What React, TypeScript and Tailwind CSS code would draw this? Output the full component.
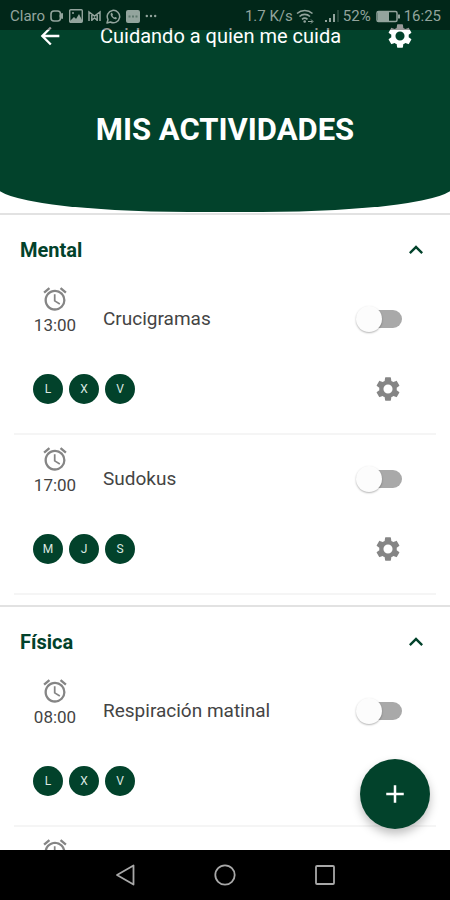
import { useState } from "react";
import {
    MdAccessAlarm,
    MdAdd,
    MdArrowBack,
    MdExpandLess,
    MdExpandMore,
} from "react-icons/md";

type Actividad = {
    id: number;
    hora: string;
    nombre: string;
    dias: string[];
};

type Categoria = {
    titulo: string;
    actividades: Actividad[];
};

const categorias: Categoria[] = [
    {
        titulo: "Mental",
        actividades: [
            { id: 1, hora: "13:00", nombre: "Crucigramas", dias: ["L", "X", "V"] },
            { id: 2, hora: "17:00", nombre: "Sudokus", dias: ["M", "J", "S"] },
        ],
    },
    {
        titulo: "Física",
        actividades: [
            { id: 3, hora: "08:00", nombre: "Respiración matinal", dias: ["L", "X", "V"] },
            { id: 4, hora: "", nombre: "", dias: [] },
        ],
    },
];

const Engranaje = ({ className }: { className?: string }) => (
    <svg className={className} viewBox="0 0 24 24" fill="currentColor" fillRule="evenodd">
        <path d="M19.430 12.980c.04-.32.07-.64.07-.98s-.03-.66-.07-.98l2.110-1.650c.19-.15.24-.42.12-.64l-2-3.460c-.12-.22-.39-.3-.61-.22l-2.490 1c-.52-.4-1.080-.73-1.690-.98l-.38-2.650C14.460 2.180 14.250 2 14 2h-4c-.25 0-.46.18-.49.42l-.38 2.650c-.61.25-1.170.59-1.690.98l-2.490-1c-.23-.09-.49 0-.61.22l-2 3.460c-.13.22-.07.49.12.64l2.110 1.650c-.04.32-.07.65-.07.98s.03.66.07.98l-2.110 1.650c-.19.15-.24.42-.12.64l2 3.460c.12.22.39.3.61.22l2.490-1c.52.4 1.080.73 1.690.98l.38 2.650c.03.24.24.42.49.42h4c.25 0 .46-.18.49-.42l.38-2.650c.61-.25 1.170-.59 1.690-.98l2.490 1c.23.09.49 0 .61-.22l2-3.460c.12-.22.07-.49-.12-.64l-2.110-1.650zM12 15.900a3.900 3.900 0 1 1 0-7.800 3.900 3.900 0 0 1 0 7.800z" />
    </svg>
);

const StatusBar = () => (
    <div className="absolute inset-x-0 top-0 z-20 flex h-[30px] items-center justify-between bg-black/40 pl-[10px] pr-[9px] pt-[2px] text-[15px] text-[#93a49d]">
        <div className="flex items-center gap-[5px]">
            <span>Claro</span>
            {/* cámara */}
            <svg width="14" height="14" viewBox="0 0 14 14" fill="none" stroke="currentColor" strokeWidth="1.6">
                <rect x="1" y="2" width="9.500" height="10" rx="3" />
                <path d="M10 5.500l2.500-1v5l-2.500-1z" fill="currentColor" strokeWidth="1" />
            </svg>
            {/* imagen */}
            <svg width="14" height="14" viewBox="0 0 14 14" fill="none" stroke="currentColor" strokeWidth="1.4">
                <rect x="0.7" y="0.7" width="12.6" height="12.6" rx="1" />
                <path d="M1 12l4-4 2 2 3-5 3 6v2H1z" fill="currentColor" stroke="none" />
                <path d="M3 4h2M7 10l-2 3" />
            </svg>
            {/* correo */}
            <svg width="13" height="12" viewBox="0 0 13 12" fill="none" stroke="currentColor" strokeWidth="1.500">
                <path d="M1 11V2l5.500 4L12 2v9M3.800 11V5M9.200 11V5M4 10l2.500-2L9 10" />
            </svg>
            {/* whatsapp */}
            <svg width="15" height="15" viewBox="0 0 15 15">
                <path d="M1 14l1-3.500A6.200 6.200 0 1 1 4.500 13z" fill="none" stroke="currentColor" strokeWidth="1.500" strokeLinejoin="round" />
                <path d="M5.200 4c-1 .8-.8 2.400.8 4.200s3.600 2.600 4.600 1.500c.5-.6.3-.9-.2-1.200l-1-.5c-.5-.2-.8.600-1.200.5-.7-.3-1.400-1-1.700-1.700-.1-.4.600-.7.400-1.200L6.300 4.300C6 3.800 5.600 3.700 5.200 4z" fill="currentColor" />
            </svg>
            {/* mensajes */}
            <svg width="14" height="13" viewBox="0 0 14 13">
                <rect width="14" height="13" rx="2" fill="currentColor" />
                <path d="M2.500 6.500h2M6 6.500h2M9.500 6.500h2" stroke="#5d776c" strokeWidth="2" />
            </svg>
            <svg width="14" height="4" viewBox="0 0 14 4" fill="currentColor">
                <circle cx="1.800" cy="2" r="1.200" />
                <circle cx="6" cy="2" r="1.200" />
                <circle cx="10.200" cy="2" r="1.200" />
            </svg>
        </div>
        <div className="flex items-center gap-[3px]">
            <span>1.7 K/s</span>
            <svg width="18" height="15" viewBox="0 0 18 15" fill="none" stroke="currentColor" strokeWidth="1.600">
                <path d="M1 4.500C5.500.5 12 .5 16.500 4.500M3.500 7.500c3-2.800 7.500-2.800 10.500 0M6 10.300c1.700-1.500 3.800-1.500 5.500 0" />
                <circle cx="8.700" cy="12.500" r="1.300" fill="currentColor" stroke="none" />
                <path d="M12 12.500h4.500M15 10.500l2 2-2 2" strokeWidth="1" />
            </svg>
            <svg className="ml-2" width="15" height="14" viewBox="0 0 15 14" fill="currentColor">
                <path d="M0 11h2v2H0zM4 9h2v4H4zM8 5h2v8H8z" />
                <path d="M12 1h2v12h-2z" opacity=".25" />
            </svg>
            <span>52%</span>
            <svg className="ml-[2px]" width="25" height="13" viewBox="0 0 25 13" fill="none" stroke="currentColor">
                <rect x="1" y="1.500" width="20" height="10" rx="1.500" strokeWidth="1.500" />
                <rect x="2" y="2" width="11" height="9" fill="currentColor" stroke="none" />
                <path d="M23 4.500v4" strokeWidth="2" />
            </svg>
            <span>16:25</span>
        </div>
    </div>
);

const Switch = ({ label }: { label: string }) => {
    const [activo, setActivo] = useState(false);

    return (
        <label className="relative flex h-[26px] w-[46px] items-center justify-end">
            <input
                type="checkbox"
                aria-label={label}
                checked={activo}
                onChange={(e) => setActivo(e.target.checked)}
                className="peer sr-only"
            />
            <span className="h-[18px] w-10 rounded-full bg-[#a9a9a9] peer-checked:bg-[#7fa090]" />
            <span className="absolute left-0 top-0 size-[26px] rounded-full bg-[#fcfcfc] shadow-[0_1px_2px_rgba(0,0,0,0.3)] peer-checked:left-5 peer-checked:bg-[#02422b]" />
        </label>
    );
};

const ActividadItem = ({ actividad }: { actividad: Actividad }) => (
    <li className="mx-[14px] h-40 border-b-2 border-[#f5f5f5] pt-[10px]">
        <div className="flex h-[68px] items-center pr-[34px]">
            <div className="flex w-[82px] flex-col items-center self-start">
                <MdAccessAlarm className="size-7 text-[#858585]" />
                <span className="text-[17px] leading-6 text-[#444444]">{actividad.hora}</span>
            </div>
            <span className="flex-1 pl-[7px] text-[19px] text-[#444444]">{actividad.nombre}</span>
            <Switch label={actividad.nombre} />
        </div>
        <div className="mt-5 flex h-8 items-center justify-between pl-[19px] pr-[34px]">
            <div className="flex gap-[6px]">
                {actividad.dias.map((dia) => (
                    <span
                        key={dia}
                        className="flex size-[30px] items-center justify-center rounded-full bg-[#02422b] text-xs text-[#dce8e2]"
                    >
                        {dia}
                    </span>
                ))}
            </div>
            <button type="button" aria-label="Configurar actividad">
                <Engranaje className="size-7 text-[#858585]" />
            </button>
        </div>
    </li>
);

const CategoriaSection = ({ categoria }: { categoria: Categoria }) => {
    const [abierta, setAbierta] = useState(true);
    const Flecha = abierta ? MdExpandLess : MdExpandMore;

    return (
        <section className="border-t-2 border-[#e2e2e2] pb-[10px]">
            <button
                type="button"
                onClick={() => setAbierta(!abierta)}
                className="flex h-[60px] w-full items-center justify-between px-5 pt-[10px] text-[#02422b]"
            >
                <h2 className="text-xl font-bold">{categoria.titulo}</h2>
                <Flecha className="size-7" />
            </button>
            {abierta && (
                <ul>
                    {categoria.actividades.map((a) => (
                        <ActividadItem key={a.id} actividad={a} />
                    ))}
                </ul>
            )}
        </section>
    );
};

const App = () => {
    return (
        <div className="relative flex h-screen flex-col overflow-hidden bg-white font-[Roboto,sans-serif]">
            <StatusBar />

            {/* un poco más ancho que la pantalla para que la curva salga por los bordes */}
            <header className="-mx-1 h-[212px] shrink-0 rounded-[0_0_42%_42%/0_0_26px_26px] bg-[#02422b] px-1 pt-4 text-white">
                <div className="flex h-10 items-center gap-9 px-9">
                    <button type="button" aria-label="Volver">
                        <MdArrowBack className="size-7" />
                    </button>
                    <span className="flex-1 whitespace-nowrap text-xl">Cuidando a quien me cuida</span>
                    <button type="button" aria-label="Ajustes">
                        <Engranaje className="size-7" />
                    </button>
                </div>
                <h1 className="mt-[54px] text-center text-[31px] font-bold leading-10">MIS ACTIVIDADES</h1>
            </header>

            <main className="mt-px min-h-0 flex-1 overflow-hidden">
                {categorias.map((c) => (
                    <CategoriaSection key={c.titulo} categoria={c} />
                ))}
            </main>

            <button
                type="button"
                aria-label="Añadir actividad"
                className="absolute bottom-[71px] right-5 z-10 flex size-[70px] items-center justify-center rounded-full bg-[#02422b] text-white shadow-[0_5px_10px_rgba(0,0,0,0.25)]"
            >
                <MdAdd className="size-[30px]" />
            </button>

            <nav className="flex h-[50px] shrink-0 items-center justify-center gap-[76px] bg-black text-[#a8a8a8]">
                <button type="button" aria-label="Atrás">
                    <svg width="24" height="24" viewBox="0 0 24 24" fill="none" stroke="currentColor" strokeWidth="1.800" strokeLinejoin="round">
                        <path d="M4 12L20.500 2.500v19z" />
                    </svg>
                </button>
                <button type="button" aria-label="Inicio">
                    <svg width="24" height="24" viewBox="0 0 24 24" fill="none" stroke="currentColor" strokeWidth="1.800">
                        <circle cx="12" cy="12" r="9.700" />
                    </svg>
                </button>
                <button type="button" aria-label="Recientes">
                    <svg width="24" height="24" viewBox="0 0 24 24" fill="none" stroke="currentColor" strokeWidth="1.800">
                        <rect x="3" y="3" width="18" height="18" rx="1" />
                    </svg>
                </button>
            </nav>
        </div>
    );
};

export default App;
